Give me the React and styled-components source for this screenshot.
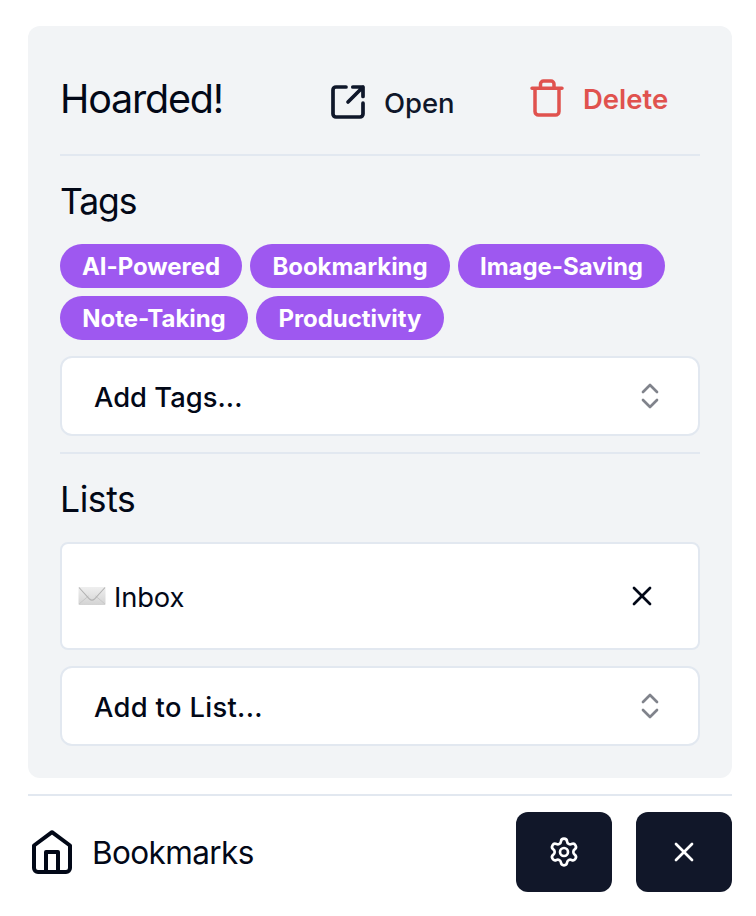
import React from "react";
import styled, { createGlobalStyle } from "styled-components";
import { Settings, X } from "lucide-react";

const Global = createGlobalStyle`
  *, *::before, *::after { box-sizing: border-box; }
  body { margin: 0; background: #fff; color: #020817; font-family: Inter, "Liberation Sans", sans-serif; }
  button { font: inherit; color: inherit; border: 0; background: none; padding: 0; }
  svg { display: block; flex: none; }
`;

const Popup = styled.div`
  display: flex;
  flex-direction: column;
  gap: 16px;
  width: 756px;
  height: 916px;
  padding: 26px 24px 24px 28px;
`;

const Card = styled.main`
  display: flex;
  flex-direction: column;
  gap: 16px;
  height: 752px;
  padding: 32px;
  border-radius: 12px;
  background: #f2f4f6;
`;

const Header = styled.header`
  display: flex;
  align-items: center;
  height: 80px;
`;

const Label = styled.span`
  display: block;
  white-space: nowrap;
  padding-top: ${(p) => p.$drop || 0}px;
  font-size: ${(p) => p.$size}px;
  font-weight: ${(p) => p.$weight || 400};
  letter-spacing: ${(p) => p.$spacing || 0}px;
`;

const Title = styled.h1`
  margin: 0;
  width: 270px;
  padding-top: 2px;
  font-size: 39px;
  line-height: 56px;
  font-weight: 400;
`;

const OpenLink = styled.button`
  display: flex;
  align-items: center;
  gap: 18px;
  width: 200px;
  padding-top: 8px;
  color: #0f172a;
`;

const DeleteButton = styled.button`
  display: flex;
  align-items: center;
  gap: 19px;
  color: #e0524e;
`;

const Rule = styled.hr`
  flex: none;
  width: 100%;
  height: 2px;
  margin: 0;
  border: 0;
  background: #e2e8f0;
`;

const SectionTitle = styled.h2`
  margin: 0;
  padding-top: 2px;
  height: 56px;
  font-size: 35px;
  line-height: 56px;
  font-weight: 400;
`;

const TagList = styled.div`
  display: flex;
  flex-wrap: wrap;
  gap: 8px;
`;

const Tag = styled.span`
  display: flex;
  align-items: center;
  justify-content: center;
  width: ${(p) => p.$width}px;
  height: 44px;
  border-radius: 22px;
  background: #9e58f0;
  color: #fff;
`;

const Select = styled.button`
  display: flex;
  align-items: center;
  justify-content: space-between;
  height: 80px;
  padding: 0 39px 0 32px;
  border: 2px solid #e2e8f0;
  border-radius: 12px;
  background: #fff;
`;

const ListItem = styled.div`
  display: flex;
  align-items: center;
  height: 108px;
  padding: 0 40px 0 16px;
  border: 2px solid #e2e8f0;
  border-radius: 8px;
  background: #fff;
`;

const ItemName = styled.div`
  display: flex;
  flex: 1;
  align-items: center;
  gap: 8px;
`;

const Footer = styled.footer`
  display: flex;
  align-items: center;
  gap: 24px;
  height: 80px;
`;

const HomeLink = styled.a`
  display: flex;
  flex: 1;
  align-items: center;
  gap: 20px;
  padding: 0 0 0 4px;
`;

const IconButton = styled.button`
  display: flex;
  align-items: center;
  justify-content: center;
  width: 96px;
  height: 80px;
  border-radius: 12px;
  background: #111729;
  color: #fff;
`;

const OpenIcon = () => (
  <svg width="36" height="36" viewBox="0 0 36 36" fill="none" stroke="currentColor" strokeWidth="3.7" strokeLinecap="round" strokeLinejoin="round">
    <path d="M16 3H6a3 3 0 0 0-3 3v24a3 3 0 0 0 3 3h24a3 3 0 0 0 3-3V19.200M22.800 3H33v9.500M33 3 18 18" />
  </svg>
);

const TrashIcon = () => (
  <svg width="34" height="38" viewBox="0 0 34 38" fill="none" stroke="currentColor" strokeWidth="3.5" strokeLinecap="round" strokeLinejoin="round">
    <path d="M2 9.200h30M5 9.200V32.500a3.500 3.500 0 0 0 3.500 3.500h17a3.500 3.500 0 0 0 3.500-3.500V9.200M10.500 9V5a3 3 0 0 1 3-3h7.500a3 3 0 0 1 3 3V9" />
  </svg>
);

const HomeIcon = () => (
  <svg width="40" height="44" viewBox="0 0 40 44" fill="none" stroke="currentColor" strokeWidth="4" strokeLinejoin="round">
    <path d="M20 2.200 38 15.500V38a4 4 0 0 1-4 4H6a4 4 0 0 1-4-4V15.500ZM14 42V22h12v20" />
  </svg>
);

const Chevrons = () => (
  <svg width="18" height="26" viewBox="0 0 18 26" fill="none" stroke="#80838b" strokeWidth="2.7" strokeLinecap="round" strokeLinejoin="round">
    <path d="m2 9 7-7 7 7M2 17l7 7 7-7" />
  </svg>
);

const Envelope = () => (
  <svg width="28" height="20" viewBox="0 0 28 20" fill="none">
    <defs>
      <linearGradient id="paper" x1="0" y1="0" x2="0" y2="1">
        <stop offset="0" stopColor="#efefef" />
        <stop offset="1" stopColor="#d3d3d3" />
      </linearGradient>
    </defs>
    <rect x=".5" y="1" width="27" height="18" rx="1" fill="url(#paper)" />
    <path d="m1 18 9.500-8M27 18l-9.500-8" stroke="#c8c8c8" />
    <path d="m1 1.500 10.500 11.500q2.500 2.400 5 0L27 1.500" stroke="#b3b3b3" strokeWidth="1.100" />
  </svg>
);

const tags = [
  { name: "AI-Powered", width: 182 },
  { name: "Bookmarking", width: 200 },
  { name: "Image-Saving", width: 207 },
  { name: "Note-Taking", width: 188 },
  { name: "Productivity", width: 188 },
];

export default function App() {
  return (
    <>
      <Global />
      <Popup>
        <Card>
          <Header>
            <Title><Label $size={39.5} $spacing={-1.2}>Hoarded!</Label></Title>
            <OpenLink><OpenIcon /><Label $size={27.5} $weight={540} $spacing={-0.1} $drop={1}>Open</Label></OpenLink>
            <DeleteButton><TrashIcon /><Label $size={27.5} $weight={600} $drop={2}>Delete</Label></DeleteButton>
          </Header>
          <Rule />
          <SectionTitle><Label $size={35.5} $spacing={-1.1}>Tags</Label></SectionTitle>
          <TagList>
            {tags.map((t) => (
              <Tag key={t.name} $width={t.width}><Label $size={24} $weight={700} $spacing={-0.05}>{t.name}</Label></Tag>
            ))}
          </TagList>
          <Select><Label $size={27.3} $weight={500} $spacing={0.05} $drop={2}>Add Tags...</Label><Chevrons /></Select>
          <Rule />
          <SectionTitle><Label $size={35.5} $spacing={-0.4}>Lists</Label></SectionTitle>
          <ListItem>
            <ItemName><Envelope /><Label $size={27.3} $spacing={-0.1} $drop={2}>Inbox</Label></ItemName>
            <X size={32} strokeWidth={2} />
          </ListItem>
          <Select><Label $size={27.3} $weight={500} $spacing={0.35} $drop={2}>Add to List...</Label><Chevrons /></Select>
        </Card>
        <Rule />
        <Footer>
          <HomeLink><HomeIcon /><Label $size={31.5} $spacing={-0.6}>Bookmarks</Label></HomeLink>
          <IconButton aria-label="Settings"><Settings size={32} strokeWidth={2} /></IconButton>
          <IconButton aria-label="Close"><X size={32} strokeWidth={2} /></IconButton>
        </Footer>
      </Popup>
    </>
  );
}
